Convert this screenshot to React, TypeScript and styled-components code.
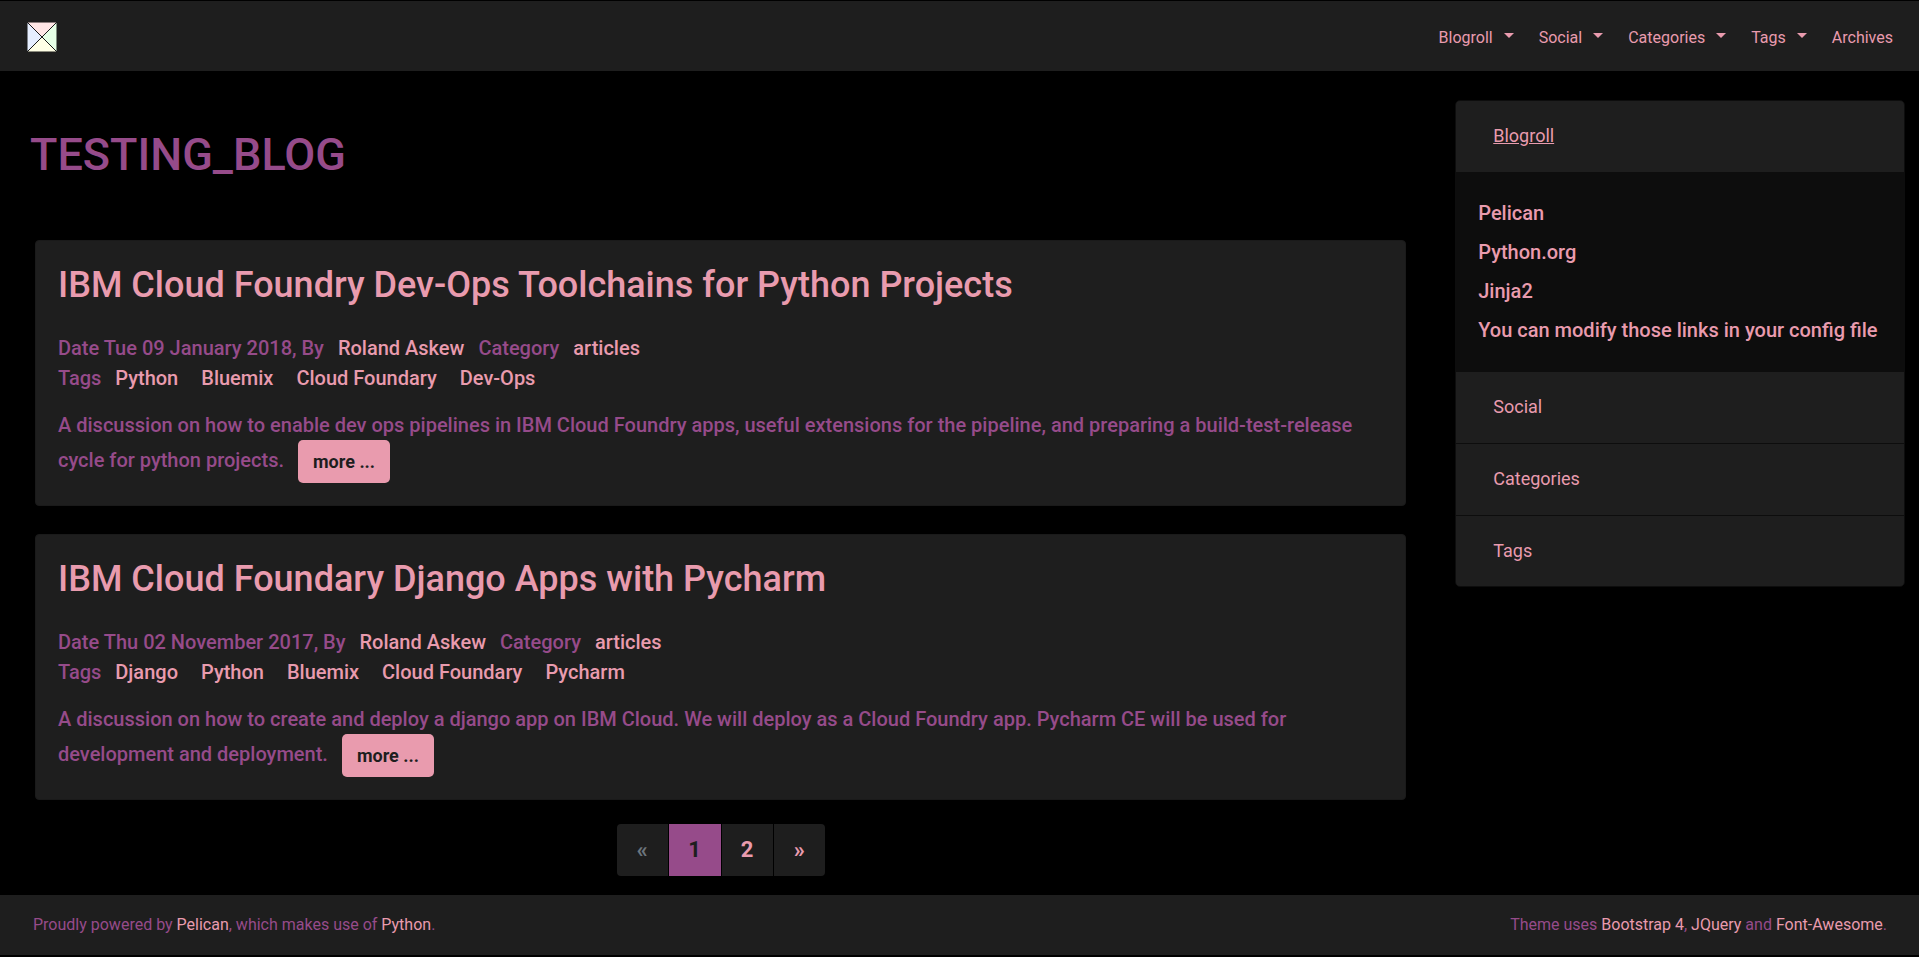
import React from 'react';
import styled, { createGlobalStyle } from 'styled-components';

const pink = '#e99bae';
const purple = '#964b8a';
const surface = '#1e1e1e';
const line = '#0d0d0d';

const GlobalStyle = createGlobalStyle`
  *, *::before, *::after { box-sizing: border-box; }
  body {
    margin: 0;
    background: #000;
    color: ${purple};
    font-family: Roboto, "Liberation Sans", sans-serif;
    font-size: 16px;
    line-height: 24px;
  }
  a { color: ${pink}; text-decoration: none; }
  h1, h2, p, ul { margin: 0; padding: 0; }
  ul { list-style: none; }
`;

const Page = styled.div`
  min-height: 100vh;
  display: flex;
  flex-direction: column;
  padding: 1px 0 2px;
`;

const Navbar = styled.header`
  height: 70px;
  padding: 2px 26px 0 27px;
  display: flex;
  align-items: center;
  justify-content: space-between;
  background: ${surface};
`;

const LogoLink = styled.a`
  display: flex;
`;

const NavList = styled.ul`
  display: flex;
  gap: 25px;
  padding-top: 2px;
`;

const NavButton = styled.button`
  display: flex;
  align-items: center;
  gap: 11px;
  padding: 0;
  border: 0;
  background: none;
  color: ${pink};
  font: inherit;
  cursor: pointer;
`;

const Caret = styled.span`
  border: 5px solid transparent;
  border-top-color: ${pink};
  border-bottom: 0;
  margin-bottom: 5px;
`;

const Columns = styled.div`
  flex: 1;
  display: grid;
  grid-template-columns: 3fr 1fr;
`;

const Main = styled.main`
  padding: 57px 33px 19px 35px;
`;

const SiteTitle = styled.h1`
  margin: 0 -5px 58px;
  font-size: 45px;
  line-height: 54px;
  font-weight: 500;
`;

const Card = styled.article`
  padding: 22px;
  margin-bottom: 28px;
  border: 1px solid #1a1a1a;
  border-radius: 4px;
  background: ${surface};
  font-size: 20px;
  line-height: 30px;
  font-weight: 500;
`;

const CardTitle = styled.h2`
  margin-bottom: 26px;
  font-size: 36px;
  line-height: 44px;
  font-weight: 500;
`;

const InlineLink = styled.a`
  margin: 0 9px;
`;

const Summary = styled.p`
  margin-top: 17px;
`;

const MoreLink = styled.a`
  display: inline-block;
  vertical-align: middle;
  margin: 0 9px;
  padding: 8px 15px;
  border-radius: 5px;
  background: ${pink};
  color: ${surface};
  font-size: 18px;
  line-height: 27px;
  font-weight: 700;
`;

const Pager = styled.ul`
  display: flex;
  justify-content: center;
  gap: 1px;
  margin-top: -4px;

  li:first-child > * { border-radius: 4px 0 0 4px; }
  li:last-child > * { border-radius: 0 4px 4px 0; }
`;

const PageLink = styled.a<{ $active?: boolean; $disabled?: boolean }>`
  display: flex;
  align-items: center;
  justify-content: center;
  width: ${p => (p.$active ? 52 : 51)}px;
  height: 52px;
  background: ${p => (p.$active ? purple : surface)};
  color: ${p => (p.$active ? surface : p.$disabled ? '#6c757d' : pink)};
  font-size: 22px;
  line-height: 30px;
  font-weight: 700;
`;

const Sidebar = styled.aside`
  padding: 29px 14px 0 16px;
`;

const Accordion = styled.div`
  border: 1px solid ${line};
  border-radius: 5px;
  overflow: hidden;
  background: ${line};
`;

const AccordionHeader = styled.button<{ $open?: boolean; $last?: boolean }>`
  display: block;
  width: 100%;
  height: ${p => (p.$last ? 70 : 71)}px;
  padding: 0 37px 1px;
  margin-bottom: ${p => (p.$open || p.$last ? 0 : 1)}px;
  border: 0;
  background: ${surface};
  color: ${pink};
  font: inherit;
  font-size: 18px;
  text-align: left;
  text-decoration: ${p => (p.$open ? 'underline' : 'none')};
  cursor: pointer;
`;

const LinkList = styled.ul`
  padding: 22px;
  font-size: 20px;
  line-height: 39px;
  font-weight: 500;
`;

const Footer = styled.footer`
  height: 60px;
  padding: 0 32px 0 33px;
  display: flex;
  align-items: center;
  justify-content: space-between;
  background: ${surface};
`;

const Logo = () => (
  <svg width="30" height="30" viewBox="0 0 30 30" aria-label="Home">
    <path d="M0 0H30L15 15Z" fill="#ffe6e6" />
    <path d="M30 0V30L15 15Z" fill="#e6ffe6" />
    <path d="M30 30H0L15 15Z" fill="#ffffe6" />
    <path d="M0 30V0L15 15Z" fill="#e6eeff" />
    <rect x="0.5" y="0.5" width="29" height="29" fill="none" stroke="#000" strokeOpacity="0.45" />
    <path d="M0 0L30 30M30 0L0 30" stroke="#1a1a1a" strokeWidth="1" />
  </svg>
);

const menus = ['Blogroll', 'Social', 'Categories', 'Tags'];
const blogroll = ['Pelican', 'Python.org', 'Jinja2', 'You can modify those links in your config file'];

const posts = [
  {
    title: 'IBM Cloud Foundry Dev-Ops Toolchains for Python Projects',
    date: 'Tue 09 January 2018',
    tags: ['Python', 'Bluemix', 'Cloud Foundary', 'Dev-Ops'],
    summary:
      'A discussion on how to enable dev ops pipelines in IBM Cloud Foundry apps, useful extensions for the pipeline, and preparing a build-test-release cycle for python projects.',
  },
  {
    title: 'IBM Cloud Foundary Django Apps with Pycharm',
    date: 'Thu 02 November 2017',
    tags: ['Django', 'Python', 'Bluemix', 'Cloud Foundary', 'Pycharm'],
    summary:
      'A discussion on how to create and deploy a django app on IBM Cloud. We will deploy as a Cloud Foundry app. Pycharm CE will be used for development and deployment.',
  },
];

export default function App() {
  return (
    <>
      <GlobalStyle />
      <Page>
        <Navbar>
          <LogoLink href="#"><Logo /></LogoLink>
          <nav>
            <NavList>
              {menus.map(m => (
                <li key={m}>
                  <NavButton type="button">{m}<Caret /></NavButton>
                </li>
              ))}
              <li><a href="#archives">Archives</a></li>
            </NavList>
          </nav>
        </Navbar>
        <Columns>
          <Main>
            <SiteTitle>TESTING_BLOG</SiteTitle>
            {posts.map(post => (
              <Card key={post.title}>
                <CardTitle><a href="#post">{post.title}</a></CardTitle>
                <p>
                  Date {post.date}, By <InlineLink href="#author">Roland Askew</InlineLink>{' '}
                  Category <InlineLink href="#category">articles</InlineLink>
                </p>
                <p>
                  Tags{' '}
                  {post.tags.map(t => (
                    <React.Fragment key={t}><InlineLink href="#tag">{t}</InlineLink>{' '}</React.Fragment>
                  ))}
                </p>
                <Summary>
                  {post.summary} <MoreLink href="#post">more ...</MoreLink>
                </Summary>
              </Card>
            ))}
            <nav aria-label="Pages">
              <Pager>
                <li><PageLink as="span" $disabled>«</PageLink></li>
                <li><PageLink href="#1" $active>1</PageLink></li>
                <li><PageLink href="#2">2</PageLink></li>
                <li><PageLink href="#2">»</PageLink></li>
              </Pager>
            </nav>
          </Main>
          <Sidebar>
            <Accordion>
              <AccordionHeader type="button" $open>Blogroll</AccordionHeader>
              <LinkList>
                {blogroll.map(b => <li key={b}><a href="#link">{b}</a></li>)}
              </LinkList>
              <AccordionHeader type="button">Social</AccordionHeader>
              <AccordionHeader type="button">Categories</AccordionHeader>
              <AccordionHeader type="button" $last>Tags</AccordionHeader>
            </Accordion>
          </Sidebar>
        </Columns>
        <Footer>
          <p>Proudly powered by <a href="#pelican">Pelican</a>, which makes use of <a href="#python">Python</a>.</p>
          <p>
            Theme uses <a href="#bootstrap">Bootstrap 4</a>, <a href="#jquery">JQuery</a> and{' '}
            <a href="#fa">Font-Awesome</a>.
          </p>
        </Footer>
      </Page>
    </>
  );
}
